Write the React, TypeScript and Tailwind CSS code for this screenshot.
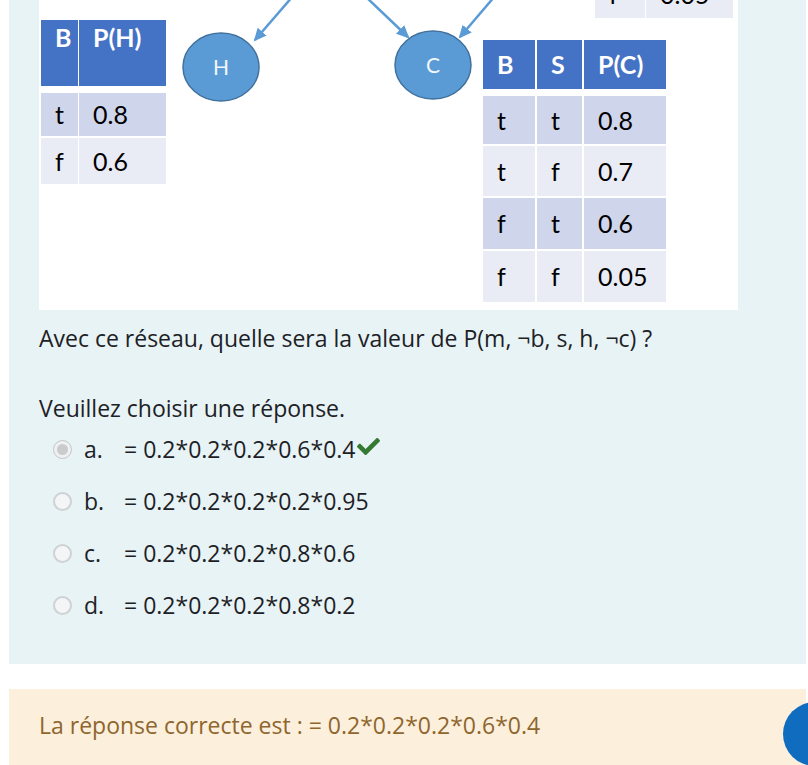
import React from 'react';
import { FaCheck, FaChevronLeft } from 'react-icons/fa';

const HEAD = 'bg-[#4472c4] text-white font-bold';
const ODD = 'bg-[#cfd5ea]';
const EVEN = 'bg-[#e9ebf5]';

function Cell({ w, h, cls, children, top }: { w: number; h: number; cls: string; children?: React.ReactNode; top?: boolean }) {
  return (
    <div
      className={`${cls} flex pl-[14px] ${top ? 'items-start pt-[5px]' : 'items-center'}`}
      style={{ width: w, height: h }}
    >
      {children}
    </div>
  );
}

function Diagram() {
  return (
    <div className="relative w-[699px] h-[310px] bg-white overflow-hidden font-['Lato',sans-serif] text-[25px] leading-none text-black">
      {/* node graph */}
      <svg className="absolute inset-0" width="699" height="310" viewBox="0 0 699 310">
        <defs>
          <marker id="arr" markerWidth="13" markerHeight="12" refX="11" refY="6" orient="auto" markerUnits="userSpaceOnUse">
            <path d="M0,0 L13,6 L0,12 Z" fill="#5b9bd5" />
          </marker>
        </defs>
        <g stroke="#5b9bd5" strokeWidth="2.5" fill="none">
          <line x1="254" y1="-4" x2="216" y2="40" markerEnd="url(#arr)" />
          <line x1="326" y1="-4" x2="369" y2="37" markerEnd="url(#arr)" />
          <line x1="456" y1="-4" x2="421" y2="37" markerEnd="url(#arr)" />
        </g>
        <ellipse cx="182" cy="67" rx="38" ry="34" fill="#5b9bd5" stroke="#41719c" strokeWidth="1.5" />
        <ellipse cx="394" cy="65" rx="38" ry="34" fill="#5b9bd5" stroke="#41719c" strokeWidth="1.5" />
        <text x="182" y="75" textAnchor="middle" fill="#f2f7fc" fontSize="21" fontFamily="Lato, sans-serif">H</text>
        <text x="394" y="73" textAnchor="middle" fill="#f2f7fc" fontSize="21" fontFamily="Lato, sans-serif">C</text>
      </svg>

      {/* partial table above */}
      <div className="absolute left-[556px] top-[-30px] flex gap-[1px]">
        <Cell w={50} h={48} cls={EVEN}>f</Cell>
        <Cell w={87} h={48} cls={EVEN}>0.05</Cell>
      </div>

      {/* P(H) table */}
      <div className="absolute left-[2px] top-[20px] flex flex-col">
        <div className="flex gap-[1px]">
          <Cell w={37} h={66} cls={HEAD} top>B</Cell>
          <Cell w={87} h={66} cls={HEAD} top>P(H)</Cell>
        </div>
        <div className="flex gap-[1px] mt-[7px]">
          <Cell w={37} h={43} cls={ODD}>t</Cell>
          <Cell w={87} h={43} cls={ODD}>0.8</Cell>
        </div>
        <div className="flex gap-[1px] mt-[2px]">
          <Cell w={37} h={46} cls={EVEN}>f</Cell>
          <Cell w={87} h={46} cls={EVEN}>0.6</Cell>
        </div>
      </div>

      {/* P(C) table */}
      <div className="absolute left-[444px] top-[40px] flex flex-col gap-[2px]">
        <div className="flex gap-[2px]">
          <Cell w={52} h={49} cls={HEAD}>B</Cell>
          <Cell w={45} h={49} cls={HEAD}>S</Cell>
          <Cell w={82} h={49} cls={HEAD}>P(C)</Cell>
        </div>
        <div className="flex gap-[2px] mt-[5px]">
          <Cell w={52} h={48} cls={ODD}>t</Cell>
          <Cell w={45} h={48} cls={ODD}>t</Cell>
          <Cell w={82} h={48} cls={ODD}>0.8</Cell>
        </div>
        <div className="flex gap-[2px]">
          <Cell w={52} h={50} cls={EVEN}>t</Cell>
          <Cell w={45} h={50} cls={EVEN}>f</Cell>
          <Cell w={82} h={50} cls={EVEN}>0.7</Cell>
        </div>
        <div className="flex gap-[2px]">
          <Cell w={52} h={51} cls={ODD}>f</Cell>
          <Cell w={45} h={51} cls={ODD}>t</Cell>
          <Cell w={82} h={51} cls={ODD}>0.6</Cell>
        </div>
        <div className="flex gap-[2px]">
          <Cell w={52} h={51} cls={EVEN}>f</Cell>
          <Cell w={45} h={51} cls={EVEN}>f</Cell>
          <Cell w={82} h={51} cls={EVEN}>0.05</Cell>
        </div>
      </div>
    </div>
  );
}

const options = [
  { key: 'a.', text: '= 0.2*0.2*0.2*0.6*0.4', checked: true },
  { key: 'b.', text: '= 0.2*0.2*0.2*0.2*0.95' },
  { key: 'c.', text: '= 0.2*0.2*0.2*0.8*0.6' },
  { key: 'd.', text: '= 0.2*0.2*0.2*0.8*0.2' },
];

export default function App() {
  return (
    <div className="relative min-h-screen bg-white overflow-hidden font-['Open_Sans',sans-serif] text-[#1d2125]">
      <div className="ml-[9px] mr-[2px] bg-[#e7f3f5] pl-[30px] pb-[44px]">
        <Diagram />
        <p className="mt-[13px] text-[23px] leading-[30px]">
          Avec ce réseau, quelle sera la valeur de P(m, ¬b, s, h, ¬c) ?
        </p>
        <p className="mt-[40px] text-[23px] leading-[30px]">Veuillez choisir une réponse.</p>
        <div className="flex flex-col gap-[22px] mt-[11px] pl-[14px]">
          {options.map((o) => (
            <div key={o.key} className="flex items-center h-[30px] text-[23px] leading-[30px]">
              {o.checked ? (
                <span className="w-[19px] h-[19px] rounded-full border border-[#c4c7c9] bg-[#eef0f1] flex items-center justify-center">
                  <span className="w-[11px] h-[11px] rounded-full bg-[#c9cbcd]" />
                </span>
              ) : (
                <span className="w-[19px] h-[19px] rounded-full border-2 border-[#cfd2d4] bg-[#f3f5f6]" />
              )}
              <span className="ml-[12px] w-[40px]">{o.key}</span>
              <span>{o.text}</span>
              {o.checked && <FaCheck className="ml-[1px] mb-[5px] text-[#357a32]" size={23} />}
            </div>
          ))}
        </div>
      </div>
      <div className="ml-[9px] mr-[2px] mt-[25px] bg-[#fcefdc] pl-[30px] pt-[21px] pb-[40px] text-[23px] leading-[30px] text-[#8e662e]">
        La réponse correcte est : = 0.2*0.2*0.2*0.6*0.4
      </div>
      <button className="absolute left-[783px] top-[702px] w-[64px] h-[64px] rounded-full bg-[#0f6cbf] flex items-center justify-center text-white">
        <FaChevronLeft size={18} />
      </button>
    </div>
  );
}
